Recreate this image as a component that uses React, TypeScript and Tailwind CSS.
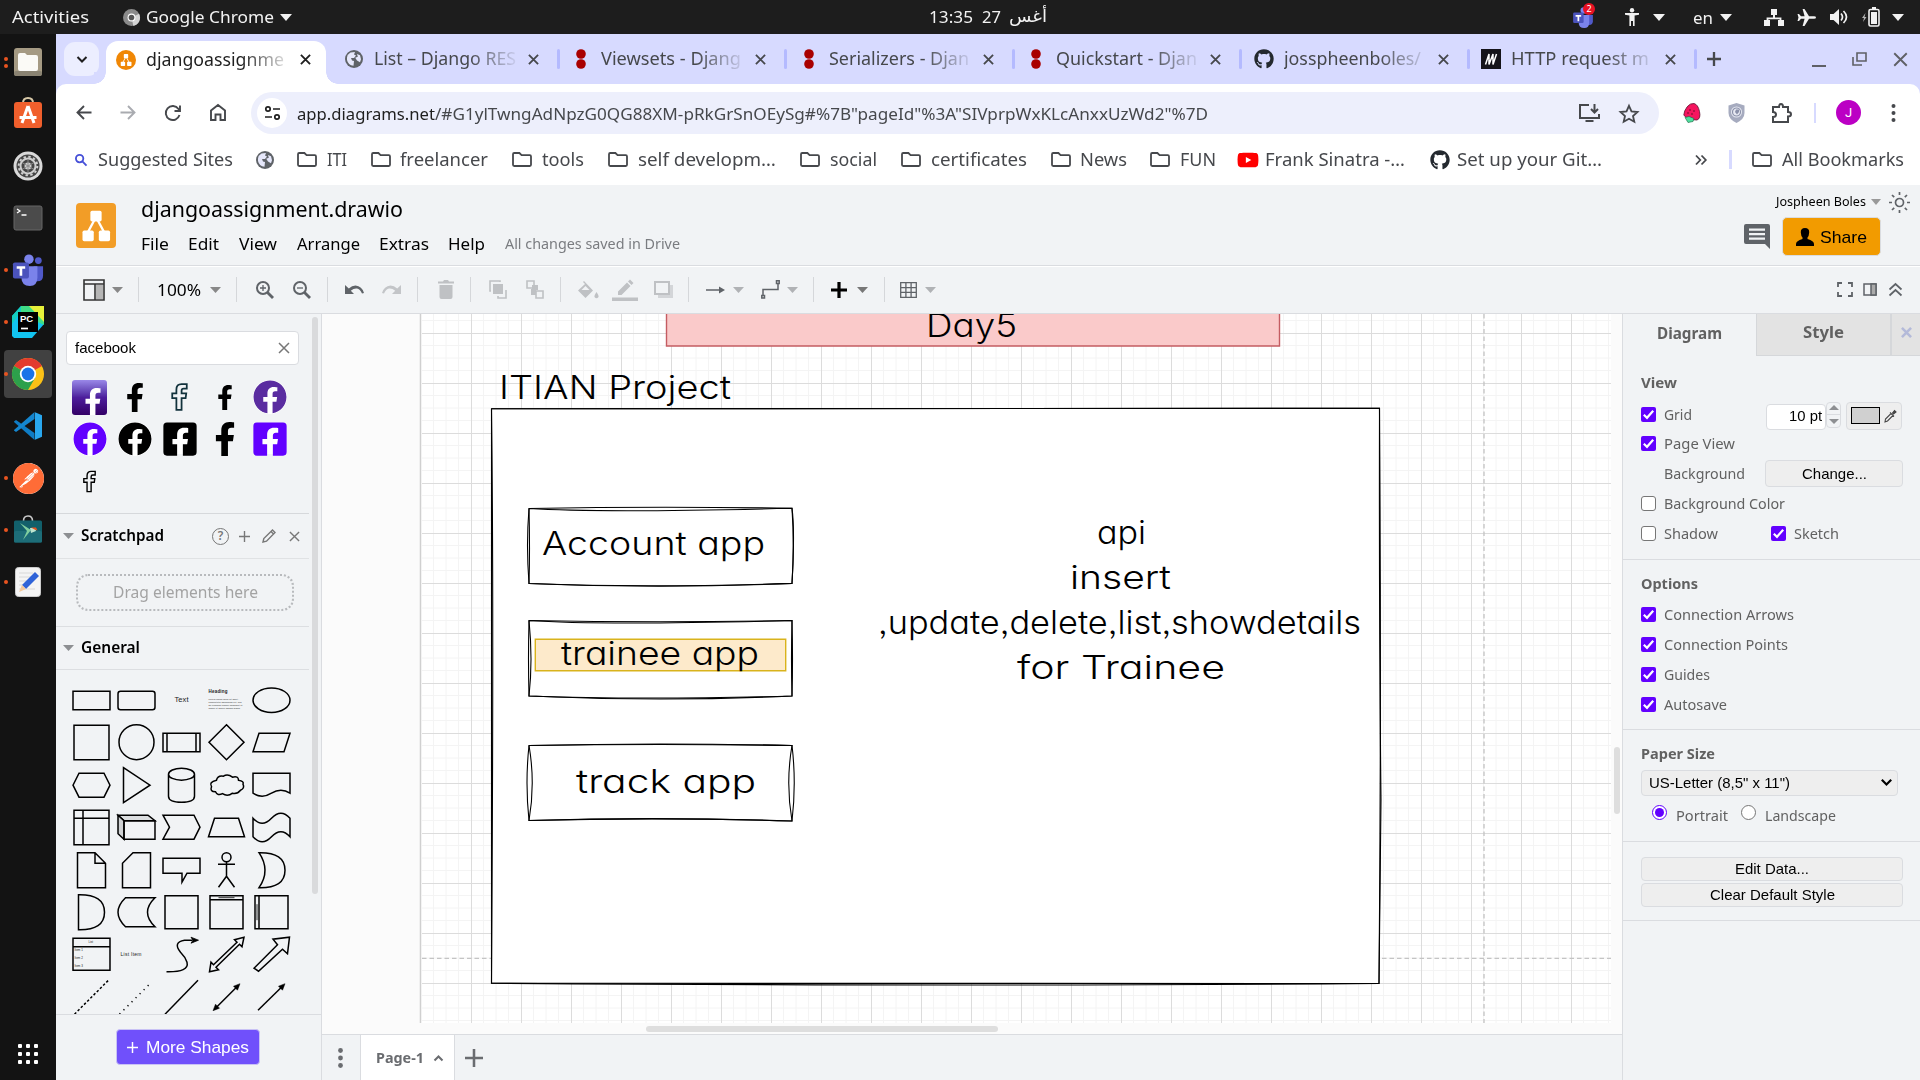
import React, { useLayoutEffect, useRef } from "react";
import { FaFacebook, FaFacebookF, FaFacebookSquare, FaGithub, FaYoutube } from "react-icons/fa";
import { SiPostman } from "react-icons/si";

/** One line of text condensed or stretched to an exact width. */
function T({ w, className = "", children }: { w: number; className?: string; children: React.ReactNode }) {
  const ref = useRef<HTMLSpanElement>(null);
  useLayoutEffect(() => {
    const el = ref.current;
    if (!el) return;
    el.style.transform = "none";
    const natural = el.getBoundingClientRect().width;
    if (natural > 0) el.style.transform = `scaleX(${w / natural})`;
  }, [w]);
  return (
    <span className={`block shrink-0 whitespace-nowrap leading-none ${className}`} style={{ width: w }}>
      <span ref={ref} className="inline-block origin-left">{children}</span>
    </span>
  );
}

type SvgProps = { className: string; vb: string; children: React.ReactNode; stroke?: number };
function Svg({ className, vb, children, stroke }: SvgProps) {
  return (
    <svg
      className={`block shrink-0 overflow-visible ${className}`}
      viewBox={vb}
      fill={stroke ? "none" : "currentColor"}
      stroke={stroke ? "currentColor" : "none"}
      strokeWidth={stroke}
    >
      {children}
    </svg>
  );
}

const Caret = ({ className = "" }: { className?: string }) => (
  <Svg className={`h-[7px] w-[12px] ${className}`} vb="0 0 12 7"><path d="M0 0h12L6 7z" /></Svg>
);
const Cross = ({ className = "", s = 2 }: { className?: string; s?: number }) => (
  <Svg className={className} vb="0 0 12 12" stroke={s}><path d="M1 1l10 10M11 1L1 11" /></Svg>
);
const Plus = ({ className = "", s = 2 }: { className?: string; s?: number }) => (
  <Svg className={className} vb="0 0 12 12" stroke={s}><path d="M6 0v12M0 6h12" /></Svg>
);
const Folder = ({ className = "" }: { className?: string }) => (
  <Svg className={`h-[15px] w-[20px] ${className}`} vb="0 0 20 15" stroke={1.8}>
    <path d="M1 2.2Q1 1 2.2 1H7.4L9.6 3.2H17.8Q19 3.2 19 4.4V12.8Q19 14 17.8 14H2.2Q1 14 1 12.8z" />
  </Svg>
);
const Globe = ({ className = "" }: { className?: string }) => (
  <Svg className={`h-[18px] w-[18px] text-[#5f6368] ${className}`} vb="0 0 18 18">
    <circle cx="9" cy="9" r="9" />
    <path fill="#e6e8fb" d="M2 7.5Q2.5 4 5.5 2.4L10 2 9 4.6 11 5.4 9 8 6 8 7 10.5 9 11 8.5 15.8Q3 15 2 10zM12 4l3 1.2 1 4-1 3-3-1.8-1.8-2.6 2.6-1z" />
  </Svg>
);

/* ------------------------------------------------ system bar */

const Teams = ({ className }: { className: string }) => (
  <Svg className={className} vb="0 0 32 34">
    <circle cx="17" cy="5.5" r="5" fill="#7b83eb" />
    <circle cx="27" cy="7" r="3.6" fill="#5059c9" />
    <path fill="#5059c9" d="M22 13h10v10q0 6-6 6h-4z" />
    <path fill="#7b83eb" d="M9 13h17v12q0 9-8 9-9 0-9-9z" />
    <rect y="9" width="17" height="17" rx="2" fill="#4b53bc" />
    <path fill="#fff" d="M4 13h9v2.6H9.9V23H7.1v-7.4H4z" />
  </Svg>
);

function SystemBar() {
  return (
    <header className="flex h-[34px] shrink-0 items-center bg-[#1d1d1d] text-[17px] text-[#f2f2f2]">
      <T w={77} className="ml-[12px] -mt-px">Activities</T>
      <Svg className="ml-[34px] h-[17px] w-[17px]" vb="0 0 18 18">
        <circle cx="9" cy="9" r="9" fill="#8a8a8a" /><path d="M9 9L17 5A9 9 0 0 1 11 18z" fill="#d4d4d4" />
        <circle cx="9" cy="9" r="4.2" fill="#fff" /><circle cx="9" cy="9" r="3" fill="#555" />
      </Svg>
      <T w={128} className="ml-[6px] -mt-px">Google Chrome</T>
      <Caret className="ml-[6px]" />
      <T w={44} className="ml-[637px] -mt-px">13:35</T>
      <T w={19} className="ml-[9px] -mt-px">27</T>
      <T w={38} className="ml-[8px] -mt-px font-['DejaVu_Sans',sans-serif]">أغس</T>
      <div className="relative ml-[526px]">
        <Teams className="h-[21px] w-[20px]" />
        <div className="absolute -right-0.5 -top-1 flex h-[12px] w-[12px] items-center justify-center rounded-full bg-[#e81123] text-[9px] leading-none text-white">2</div>
      </div>
      <Svg className="ml-[32px] h-[18px] w-[14px]" vb="0 0 14 18">
        <circle cx="7" cy="2.2" r="2.2" /><path d="M0 5h14v1.8l-4.4.8V18H8v-5H6v5H4.4V7.6L0 6.8z" />
      </Svg>
      <Caret className="ml-[14px]" />
      <T w={20} className="ml-[28px]">en</T>
      <Caret className="ml-[7px]" />
      <Svg className="ml-[32px] h-[17px] w-[20px]" vb="0 0 20 17">
        <path d="M7 0h6v6h-2v2.6h6.4V11H20v6h-6v-6h1.6v-.8H4.4v.8H6v6H0v-6h2.6V8.600h6.400V6H7z" />
      </Svg>
      <Svg className="ml-[13px] h-[17px] w-[19px]" vb="0 0 19 17">
        <path d="M19 8.500q0 1.300-2 1.300h-5L7.500 17H5.600l2-7.200H4L2 12H.5l1-3.500-1-3.500H2l2 2.200h3.600L5.600 0h1.900L12 7.200h5q2 0 2 1.300z" />
      </Svg>
      <Svg className="ml-[14px] h-[16px] w-[18px]" vb="0 0 18 16">
        <path d="M0 5h3.500L9 0v16L3.500 11H0z" /><path d="M11 4.500q3 3.500 0 7M13.500 2q6 6 0 12" fill="none" stroke="currentColor" strokeWidth="1.700" />
      </Svg>
      <Svg className="ml-[14px] h-[20px] w-[18px]" vb="0 0 18 20">
        <path d="M3.500 6L0 11h2L1 15l3.500-5h-2z" opacity=".7" /><path d="M10 0h4v2h-4z" />
        <rect x="7" y="2.500" width="10" height="16.500" rx="1.500" fill="none" stroke="currentColor" strokeWidth="1.600" /><path d="M9 5h6v12H9z" />
      </Svg>
      <Caret className="ml-[12px]" />
    </header>
  );
}

/* ------------------------------------------------ dock */

const dockIcons: { running?: number; active?: boolean; icon: React.ReactNode }[] = [
  { running: 2, icon: (
    <Svg className="h-[30px] w-[30px]" vb="0 0 30 30">
      <rect x="1" y="1" width="28" height="28" rx="3" fill="#a59a83" /><rect x="1" y="24" width="28" height="5" rx="2" fill="#8a8372" />
      <path d="M5 8q0-2 2-2h5l2 2h9q2 0 2 2v12q0 2-2 2H7q-2 0-2-2z" fill="#fbfaf6" />
    </Svg>) },
  { icon: (
    <Svg className="-mt-[3px] h-[32px] w-[30px]" vb="0 0 30 32">
      <path d="M10 6q0-5 5-5t5 5" fill="none" stroke="#d8c9a8" strokeWidth="2" />
      <rect x="1" y="5" width="28" height="26" rx="3" fill="#f05f2c" />
      <path d="M15 9L9 26M15 9l6 17M6.500 20.500h17" fill="none" stroke="#fff" strokeWidth="3" />
    </Svg>) },
  { icon: (
    <Svg className="h-[30px] w-[30px]" vb="0 0 30 30">
      <circle cx="15" cy="15" r="14.500" fill="#d9d9d9" /><circle cx="15" cy="15" r="11.500" fill="#454545" />
      <circle cx="15" cy="15" r="7.500" fill="none" stroke="#cfcfcf" strokeWidth="2" />
      <circle cx="15" cy="15" r="9.300" fill="none" stroke="#cfcfcf" strokeWidth="2" strokeDasharray="2.400 2.470" />
      <circle cx="15" cy="15" r="3.500" fill="#cfcfcf" /><path d="M15 8v14M9 11.500l12 7M9 18.500l12-7" stroke="#8d8d8d" />
    </Svg>) },
  { icon: (
    <Svg className="h-[26px] w-[30px]" vb="0 0 30 26">
      <rect x="1" y="1" width="28" height="24" rx="2" fill="#4b4b4b" stroke="#666" />
      <path d="M4 4l3 2-3 2M8.500 10h5" fill="none" stroke="#fff" strokeWidth="1.300" />
    </Svg>) },
  { running: 1, icon: <Teams className="h-[32px] w-[34px]" /> },
  { running: 1, icon: (
    <Svg className="h-[32px] w-[32px]" vb="0 0 32 32">
      <path d="M9 0h23v18L20 32H2L0 30V10z" fill="#12c4f0" /><path d="M9 0L0 10v8L10 4z" fill="#14cfc0" /><path d="M9 0h10l13 14v5L9 8z" fill="#3fdc86" /><path d="M17 0h15v16z" fill="#e8f13a" />
      <rect x="6" y="6" width="20" height="20" fill="#000" />
      <path d="M9 22.500h7" stroke="#fff" strokeWidth="1.700" />
      <text x="8" y="16" fontSize="9.500" fontWeight="700" fill="#fff" className="font-['Liberation_Sans',sans-serif]">PC</text>
    </Svg>) },
  { running: 1, active: true, icon: (
    <Svg className="h-[32px] w-[32px]" vb="0 0 32 32">
      <circle cx="16" cy="16" r="16" fill="#fbc116" />
      <path d="M16 16L2.100 8A16 16 0 0 1 29.900 8z" fill="#e33b2e" />
      <path d="M16 16L2.100 8A16 16 0 0 0 16 32l7-12z" fill="#2da04b" />
      <circle cx="16" cy="16" r="8.200" fill="#fff" /><circle cx="16" cy="16" r="6.400" fill="#1a73e8" />
    </Svg>) },
  { icon: (
    <Svg className="h-[28px] w-[28px]" vb="0 0 28 28">
      <path d="M0 9.500l2-1.500L20.500 21v7L0 10z" fill="#0f7cc4" /><path d="M0 18.500L2 20 20.500 7V0L0 18z" fill="#1486cf" />
      <path d="M20.500 0L28 3.300V24.700L20.500 28q1 0 .5-1.500V1.500q.5-1.500-.5-1.500z" fill="#29a7ee" />
    </Svg>) },
  { running: 1, icon: (
    <div className="flex h-[31px] w-[31px] items-center justify-center rounded-full bg-white">
      <SiPostman className="h-[31px] w-[31px] text-[#ff6c37]" />
    </div>) },
  { running: 1, icon: (
    <Svg className="-mt-[3px] h-[28px] w-[28px]" vb="0 0 28 28">
      <path d="M9.500 6q0-5 4.500-5t4.500 5" fill="none" stroke="#c9c9c9" strokeWidth="1.600" />
      <rect y="5.500" width="28" height="22" rx="1.500" fill="#12606b" /><rect y="16" width="28" height="11.500" rx="1.500" fill="#1d6d78" />
      <path d="M6 8l11 7-8 10 4-9z" fill="#7fcf9f" /><path d="M16 13h5l1 3-5 2z" fill="#bfe5d0" /><path d="M17 12.500h5l1.500 3-3-1z" fill="#e95420" />
    </Svg>) },
  { running: 1, icon: (
    <Svg className="h-[30px] w-[26px]" vb="0 0 26 30">
      <rect x=".5" y=".5" width="25" height="29" rx="3" fill="#f4f4f4" stroke="#ccc" />
      <path d="M4 6h14M4 10h12M4 14h10M4 18h10M4 22h16" stroke="#d8d8d8" />
      <path d="M20 5l4 4L11 22l-4-4z" fill="#2f63d8" /><path d="M7 18l4 4-7 3z" fill="#f4c89a" />
    </Svg>) },
];

function Dock() {
  return (
    <nav className="flex w-[56px] shrink-0 flex-col bg-[#131313] pt-[2px]">
      {dockIcons.map((d, i) => (
        <div key={i} className="relative flex h-[52px] items-center justify-center">
          <div className={d.active ? "flex h-[48px] w-[48px] items-center justify-center rounded-[4px] bg-[#414141]" : "flex h-[48px] w-[48px] items-center justify-center"}>{d.icon}</div>
          <div className="absolute left-[4px] flex flex-col gap-[3px]">
            {Array.from({ length: d.running ?? 0 }, (_, k) => <div key={k} className="h-[4px] w-[4px] rounded-full bg-[#e95420]" />)}
          </div>
        </div>
      ))}
      <div className="mx-auto mb-[16px] mt-auto grid grid-cols-3 gap-[4px]">
        {Array.from({ length: 9 }, (_, k) => <div key={k} className="h-[4px] w-[4px] rounded-[1px] bg-white" />)}
      </div>
    </nav>
  );
}

/* ------------------------------------------------ browser chrome */

const DrfDots = () => (
  <Svg className="h-[20px] w-[20px]" vb="0 0 20 20"><circle cx="10" cy="5" r="4.800" fill="#a90000" /><circle cx="10" cy="15" r="4.800" fill="#a90000" /></Svg>
);
const DrawioMark = ({ className }: { className: string }) => (
  <Svg className={className} vb="0 0 32 32">
    <path d="M16 8L8 23M16 8l8 15" stroke="#fff" strokeWidth="2" />
    <rect x="11" y="2.500" width="10" height="9.500" rx="1.500" fill="#fff" /><rect x="4" y="20" width="10" height="9.500" rx="1.500" fill="#fff" /><rect x="18.500" y="20" width="10" height="9.500" rx="1.500" fill="#fff" />
  </Svg>
);

const tabs: { title: string; w: number; icon: React.ReactNode }[] = [
  { title: "List – Django RES", w: 142, icon: <Globe className="ml-px mt-px" /> },
  { title: "Viewsets - Djang", w: 140, icon: <DrfDots /> },
  { title: "Serializers - Djan", w: 140, icon: <DrfDots /> },
  { title: "Quickstart - Djan", w: 141, icon: <DrfDots /> },
  { title: "josspheenboles/", w: 137, icon: <FaGithub className="h-[20px] w-[20px] text-[#24292f]" /> },
  { title: "HTTP request m", w: 138, icon: (
    <Svg className="h-[20px] w-[20px]" vb="0 0 20 20"><rect width="20" height="20" fill="#15141a" /><path d="M4.500 15.500L8 5v10.500L12 5v10.500L15.500 5" fill="none" stroke="#fff" strokeWidth="1.500" /></Svg>) },
];

const fade = "[mask-image:linear-gradient(to_right,#000_66%,transparent_102%)]";

function TabStrip() {
  return (
    <div className="flex h-[50px] shrink-0 items-center bg-[#d7daff] text-[17.5px] text-[#46484c]">
      <div className="ml-[8px] flex h-[34px] w-[35px] items-center justify-center rounded-[11px] bg-[#eceeff] text-[#1f1f1f]">
        <Svg className="h-[7px] w-[10px]" vb="0 0 10 7" stroke={2}><path d="M.5 1L5 5.500 9.500 1" /></Svg>
      </div>
      <div className="relative ml-[7px] mt-[7px] flex h-[43px] w-[220px] items-center rounded-t-[12px] bg-white pb-[7px] text-[#1f1f1f]">
        <div className="absolute -left-[12px] bottom-0 h-[12px] w-[12px] bg-[radial-gradient(circle_at_0_0,#d7daff_11.500px,#fff_12px)]" />
        <div className="absolute -right-[12px] bottom-0 h-[12px] w-[12px] bg-[radial-gradient(circle_at_100%_0,#d7daff_11.500px,#fff_12px)]" />
        <div className="ml-[10px] mt-[1px] flex h-[20px] w-[20px] items-center justify-center rounded-full bg-[#f08705]"><DrawioMark className="h-[14px] w-[14px]" /></div>
        <div className={`ml-[10px] mt-[1px] w-[144px] overflow-hidden py-1 ${fade}`}><T w={138}>djangoassignme</T></div>
        <Cross className="ml-[10px] mt-[1px] h-[11px] w-[11px]" />
      </div>
      <div className="ml-[17.500px] flex items-center">
        {tabs.map((t) => (
          <div key={t.title} className="flex w-[227.500px] items-center">
            <div className="h-[20px] w-[20px] shrink-0">{t.icon}</div>
            <div className={`ml-[10px] w-[144px] overflow-hidden py-1 ${fade}`}><T w={t.w}>{t.title}</T></div>
            <Cross className="ml-[10px] h-[11px] w-[11px]" />
            <div className="ml-[18px] h-[20px] w-[3px] rounded bg-[#b4baff]" />
          </div>
        ))}
      </div>
      <Plus className="-ml-[2px] h-[14px] w-[14px]" />
      <div className="ml-auto mr-[12px] flex items-center gap-[26px] text-[#5f6066]">
        <div className="mt-[13px] h-[2px] w-[14px] bg-current" />
        <Svg className="h-[14px] w-[15px]" vb="0 0 15 14" stroke={1.600}><path d="M5 1h9v8H5zM1 5v8h9" /></Svg>
        <Cross className="h-[15px] w-[15px]" s={1.500} />
      </div>
    </div>
  );
}

function AddressRow() {
  return (
    <div className="flex h-[50px] shrink-0 items-center rounded-t-[10px] bg-white pt-[8px] text-[#46484c]">
      <Svg className="-mt-px ml-[20px] h-[15px] w-[16px]" vb="0 0 16 15" stroke={1.900}><path d="M15.500 7.500H1.500M8 1L1.500 7.500 8 14" /></Svg>
      <Svg className="-mt-px ml-[28px] h-[15px] w-[16px] text-[#a9abb0]" vb="0 0 16 15" stroke={1.900}><path d="M.5 7.500h14M8 1l6.500 6.500L8 14" /></Svg>
      <Svg className="-mt-px ml-[29px] h-[16px] w-[16px]" vb="0 0 16 16" stroke={1.900}><path d="M14.500 10A7 7 0 1 1 13.500 4L15 6M15 .5V6H9.500" /></Svg>
      <Svg className="-mt-px ml-[29px] h-[17px] w-[16px]" vb="0 0 16 17" stroke={1.900}><path d="M1 6.500L8 1l7 5.500V16h-4.500v-5.500h-5V16H1z" /></Svg>
      <div className="ml-[25px] flex h-[42px] w-[1408px] items-center rounded-full bg-[#edeffc]">
        <div className="ml-[6px] flex h-[30px] w-[30px] items-center justify-center rounded-full bg-white text-[#1f1f1f]">
          <Svg className="h-[14px] w-[15px]" vb="0 0 15 14" stroke={1.700}><circle cx="3" cy="3" r="2.200" /><path d="M8 3h7M0 11h7" /><circle cx="12" cy="11" r="2.200" /></Svg>
        </div>
        <T w={138} className="ml-[10px] text-[17px] text-[#1f1f1f]">app.diagrams.net</T>
        <T w={773} className="text-[17px]">/#G1ylTwngAdNpzG0QG88XM-pRkGrSnOEySg#%7B"pageId"%3A"SIVprpWxKLcAnxxUzWd2"%7D</T>
        <Svg className="ml-[371px] h-[18px] w-[21px]" vb="0 0 21 18" stroke={2}><path d="M10 1H1v13h19v-4M15.500 0v8M12 5l3.500 3.500L19 5M6.500 17h8" /></Svg>
        <Svg className="ml-[19px] h-[19px] w-[20px]" vb="0 0 20 19" stroke={1.800}><path d="M10 1.800l2.500 5.600 6 .6-4.500 4 1.300 5.800L10 14.700l-5.300 3.100L6 12 1.500 8l6-.6z" /></Svg>
      </div>
      <Svg className="ml-[24px] h-[20px] w-[17px]" vb="0 0 17 20">
        <path d="M11 .5q4 1 5.500 8T14 17Q4 17 .8 12 1 8 4 4T11 .5z" fill="#f5155f" stroke="#5b1030" strokeWidth=".8" /><path d="M2 14.500l4-1 5 2-1 3-5 1z" fill="#4fe0a0" stroke="#14603c" strokeWidth=".6" />
        <path d="M7 6v2M11 7v2M9 10v2M5 9v2" stroke="#70102c" />
      </Svg>
      <Svg className="ml-[28px] h-[20px] w-[17px]" vb="0 0 17 20">
        <path d="M8.500 0l8 2.500V10q0 6-8 10-8-4-8-10V2.500z" fill="#a6abbf" /><circle cx="8.500" cy="9" r="5.500" fill="#e7e9f2" /><circle cx="8.500" cy="9" r="4" fill="none" stroke="#8b91aa" strokeWidth="1.200" /><path d="M8 6.500h3V9L9 11.500 7 9z" fill="#8b91aa" />
      </Svg>
      <Svg className="ml-[27px] h-[20px] w-[20px]" vb="0 0 20 20" stroke={2}><path d="M1 4h6q0-3 2-3t2 3h5v5q3 0 3 2.200T16 13.500V19H1v-5q3 0 3-2.500T1 9z" /></Svg>
      <div className="ml-[22px] h-[20px] w-[2px] bg-[#d7daff]" />
      <div className="-mt-px ml-[20px] flex h-[25px] w-[25px] items-center justify-center rounded-full bg-[#bb00c4] font-['Roboto',sans-serif] text-[13px] text-white">J</div>
      <Svg className="-mt-px ml-[30px] h-[18px] w-[5px]" vb="0 0 5 18"><circle cx="2.500" cy="2" r="2" /><circle cx="2.500" cy="9" r="2" /><circle cx="2.500" cy="16" r="2" /></Svg>
    </div>
  );
}

function Bookmarks() {
  return (
    <div className="flex h-[51px] shrink-0 items-center bg-white text-[17.500px] text-[#46484c]">
      <Svg className="ml-[19px] h-[12px] w-[12px] text-[#4650d8]" vb="0 0 13 13" stroke={2}><circle cx="5" cy="5" r="4" /><path d="M8 8l4.500 4.500" /></Svg>
      <T w={135} className="ml-[11px]">Suggested Sites</T>
      <Globe className="ml-[23px]" />
      <Folder className="ml-[23px]" /><T w={20} className="ml-[10px]">ITI</T>
      <Folder className="ml-[24px]" /><T w={88} className="ml-[9px]">freelancer</T>
      <Folder className="ml-[24px]" /><T w={42} className="ml-[10px]">tools</T>
      <Folder className="ml-[24px]" /><T w={138} className="ml-[10px]">self developm…</T>
      <Folder className="ml-[24px]" /><T w={47} className="ml-[10px]">social</T>
      <Folder className="ml-[24px]" /><T w={96} className="ml-[10px]">certificates</T>
      <Folder className="ml-[24px]" /><T w={47} className="ml-[9px]">News</T>
      <Folder className="ml-[23px]" /><T w={36} className="ml-[10px]">FUN</T>
      <FaYoutube className="ml-[21px] h-[20px] w-[22px] shrink-0 text-[#f00]" /><T w={140} className="ml-[6px]">Frank Sinatra -…</T>
      <FaGithub className="ml-[25px] h-[20px] w-[20px] shrink-0 text-[#24292f]" /><T w={145} className="ml-[7px]">Set up your Git…</T>
      <Svg className="ml-[93px] h-[10px] w-[12px]" vb="0 0 12 10" stroke={1.800}><path d="M1 .5L5.300 5 1 9.500M6.500 .5L10.800 5 6.500 9.500" /></Svg>
      <div className="ml-[22px] h-[19px] w-[3px] bg-[#d7daff]" />
      <Folder className="ml-[20px]" /><T w={122} className="ml-[10px]">All Bookmarks</T>
    </div>
  );
}

/* ------------------------------------------------ draw.io header */

function AppHeader() {
  return (
    <div className="flex h-[81px] shrink-0 border-b border-b-[#dadce0] bg-[#f1f3f5] text-black">
      <div className="ml-[20px] mt-[18px] flex h-[45px] w-[40px] items-center justify-center rounded-[4px] bg-[#f29d27]"><DrawioMark className="h-[36px] w-[36px]" /></div>
      <div className="ml-[25px] flex flex-col">
        <T w={262} className="mt-[12px] text-[22px]">djangoassignment.drawio</T>
        <div className="mt-[17px] flex items-center text-[16px]">
          <T w={28}>File</T><T w={31} className="ml-[19px]">Edit</T><T w={38} className="ml-[20px]">View</T>
          <T w={63} className="ml-[20px]">Arrange</T><T w={50} className="ml-[19px]">Extras</T><T w={37} className="ml-[19px]">Help</T>
          <T w={175} className="ml-[20px] text-[14px] text-[#7a7c80]">All changes saved in Drive</T>
        </div>
      </div>
      <div className="ml-auto mr-[10px] flex flex-col">
        <div className="mt-[6px] flex h-[22px] items-center justify-end">
          <T w={90} className="text-[12.500px]">Jospheen Boles</T>
          <Svg className="ml-[5px] h-[6px] w-[10px] text-[#999]" vb="0 0 10 6"><path d="M0 0h10L5 6z" /></Svg>
          <Svg className="ml-[8px] h-[21px] w-[21px] text-[#5f6368]" vb="0 0 21 21" stroke={1.700}>
            <circle cx="10.500" cy="10.500" r="4" />
            <path d="M10.500 0v3M10.500 18v3M0 10.500h3M18 10.500h3M3 3l2.200 2.200M15.800 15.800L18 18M18 3l-2.200 2.200M5.200 15.800L3 18" />
          </Svg>
        </div>
        <div className="mr-[29px] mt-[4px] flex items-center">
          <Svg className="h-[25px] w-[26px] text-[#5f6368]" vb="0 0 26 25">
            <path fillRule="evenodd" d="M2 0h22q2 0 2 2v23l-5-5H2q-2 0-2-2V2q0-2 2-2zM5 4.500v2.200h16V4.500zM5 9v2.200h16V9zM5 13.500v2.200h16v-2.200z" />
          </Svg>
          <div className="ml-[12px] flex h-[39px] w-[99px] items-center rounded-[5px] border border-[#dadce0] bg-[#f29b00]">
            <Svg className="ml-[13px] h-[18px] w-[18px]" vb="0 0 18 18"><path d="M9 0q4.500 0 4.200 4.500Q13 8 11.500 9.500V11Q18 13 18 16v2H0v-2Q0 13 6.500 11V9.500Q5 8 4.800 4.500 4.500 0 9 0z" /></Svg>
            <T w={47} className="ml-[6px] mt-[2px] font-['Liberation_Sans',sans-serif] text-[17px]">Share</T>
          </div>
        </div>
      </div>
    </div>
  );
}

const Sep = ({ className }: { className: string }) => <div className={`h-[25px] w-px shrink-0 bg-[#d5d7da] ${className}`} />;
const SmallCaret = ({ className }: { className: string }) => (
  <Svg className={`h-[6px] w-[11px] ${className}`} vb="0 0 11 6"><path d="M0 0h11L5.500 6z" /></Svg>
);

function Toolbar() {
  return (
    <div className="flex h-[48px] shrink-0 items-center border-b border-t border-b-[#dadce0] border-t-white bg-[#f1f3f5] pb-px text-[#5f6368]">
      <Svg className="ml-[27px] h-[22px] w-[22px] text-[#333]" vb="0 0 22 22" stroke={1.600}><path d="M1 1h20v20H1zM1 5h20M12 5v16" /><path d="M13 6h7v14h-7z" fill="#b5b5b5" stroke="none" /></Svg>
      <SmallCaret className="ml-[7px] text-[#888]" />
      <Sep className="ml-[15px]" />
      <T w={44} className="ml-[18px] text-[16px] text-black">100%</T>
      <SmallCaret className="ml-[9px] text-[#888]" />
      <Sep className="ml-[15px]" />
      <Svg className="ml-[19px] h-[18px] w-[18px]" vb="0 0 18 18" stroke={2}><circle cx="7" cy="7" r="6" /><path d="M11.500 11.500l5.500 5.500" strokeWidth="2.800" /><path d="M7 4v6M4 7h6" strokeWidth="1.300" /></Svg>
      <Svg className="ml-[19px] h-[18px] w-[18px]" vb="0 0 18 18" stroke={2}><circle cx="7" cy="7" r="6" /><path d="M11.500 11.500l5.500 5.500" strokeWidth="2.800" /><path d="M4 7h6" strokeWidth="1.300" /></Svg>
      <Sep className="ml-[16px]" />
      <Svg className="ml-[17px] h-[11px] w-[19px]" vb="0 0 19 11"><path d="M0 1v9h9L5.800 6.800Q9 4 12 4.500T17 9.500L19 9Q17 2 10.500 1.500 7 1.500 3.800 4.500z" /></Svg>
      <Svg className="ml-[18px] h-[11px] w-[19px] text-[#c3c5c8]" vb="0 0 19 11"><path d="M19 1v9h-9L13.200 6.800Q10 4 7 4.500T2 9.500L0 9Q2 2 8.500 1.500 12 1.500 15.200 4.500z" /></Svg>
      <Sep className="ml-[16px]" />
      <Svg className="ml-[20px] h-[19px] w-[16px] text-[#bfc1c4]" vb="0 0 16 19"><path d="M0 1.500h5L6 0h4l1 1.500h5v2H0zM1.500 5h13v12q0 2-2 2h-9q-2 0-2-2z" /></Svg>
      <Sep className="ml-[16px]" />
      <Svg className="ml-[18px] h-[19px] w-[18px] text-[#bfc1c4]" vb="0 0 18 19"><path d="M4 4h10v10H4z" /><path d="M2 11H1V1h10v1M17 10v8H9v-2" fill="none" stroke="currentColor" strokeWidth="1.600" /></Svg>
      <Svg className="ml-[19px] h-[19px] w-[18px] text-[#bfc1c4]" vb="0 0 18 19"><path d="M6 5h6v5h-2v5H5V9h1z" /><path d="M1 1h7v7H1zM10 11h7v7h-7z" fill="none" stroke="currentColor" strokeWidth="1.600" /></Svg>
      <Sep className="ml-[16px]" />
      <Svg className="ml-[17px] h-[18px] w-[21px] text-[#bfc1c4]" vb="0 0 21 18"><path d="M6 0l9 9.500-7.500 7.500L0 9.500 7 3 5 1zM7.500 5L3.500 9h8z" fillRule="evenodd" /><path d="M18.500 11q2.500 3.500 2 5-2 2.500-4 0-.5-1.500 2-5z" /></Svg>
      <Svg className="ml-[13px] h-[22px] w-[26px] text-[#bfc1c4]" vb="0 0 26 22"><path d="M0 18.500h26V22H0zM6 16v-3.500L15 3.500l3.500 3.500L9.500 16zM16 2.500L18 .5l3.500 3.500-2 2z" /></Svg>
      <Svg className="ml-[16px] h-[17px] w-[19px] text-[#bfc1c4]" vb="0 0 19 17"><path d="M4 4h15v13H4z" opacity=".6" /><rect x="1" y="1" width="14" height="12" fill="#f1f3f5" stroke="currentColor" strokeWidth="2" /></Svg>
      <Sep className="ml-[15px]" />
      <Svg className="ml-[17px] h-[8px] w-[19px]" vb="0 0 19 8"><path d="M0 3.200h13V.5L19 4l-6 3.500V4.800H0z" /></Svg>
      <SmallCaret className="ml-[8px] text-[#b0b2b5]" />
      <Svg className="ml-[17px] h-[19px] w-[19px]" vb="0 0 19 19" stroke={1.500}><path d="M2 15V9.500h15V4" /><path d="M.8 15.500h2.700V18H.8zM15.500.8h2.700v2.700h-2.700z" /></Svg>
      <SmallCaret className="ml-[7px] text-[#b0b2b5]" />
      <Sep className="ml-[15px]" />
      <Plus className="ml-[17px] h-[16px] w-[16px] text-black" s={2.400} />
      <SmallCaret className="ml-[10px] text-[#777]" />
      <Sep className="ml-[16px]" />
      <Svg className="ml-[15px] h-[16px] w-[17px]" vb="0 0 17 16" stroke={1.300}><path d="M.7.700h15.600v14.600H.7zM5.900.7v14.600M11.100.7v14.600M.7 5.600h15.600M.7 10.400h15.600" /></Svg>
      <SmallCaret className="ml-[8px] text-[#b0b2b5]" />
      <div className="ml-auto mr-[18px] flex items-center">
        <Svg className="h-[15px] w-[16px]" vb="0 0 16 15" stroke={1.800}><path d="M1 5V1h4M11 1h4v4M15 10v4h-4M5 14H1v-4" /></Svg>
        <Svg className="ml-[10px] h-[13px] w-[14px]" vb="0 0 14 13" stroke={1.500}><path d="M1 1h12v11H1z" /><path d="M8 1h5v11H8z" fill="#aaa" /></Svg>
        <Svg className="ml-[12px] h-[13px] w-[13px]" vb="0 0 13 13" stroke={1.700}><path d="M.5 6.500l6-5.500 6 5.500M.5 12.500l6-5.500 6 5.500" /></Svg>
      </div>
    </div>
  );
}

/* ------------------------------------------------ shape sidebar */

const OutlineF = ({ className }: { className: string }) => (
  <Svg className={className} vb="0 0 16 27" stroke={1.700}>
    <path d="M5 26V14.500H1V10h4V6.500Q5 1 10 1h5v4.500h-3Q10 5.500 10 7.500V10h4.500l-.6 4.500H10V26z" />
  </Svg>
);

const facebookIcons: React.ReactNode[] = [
  <div className="relative h-[35px] w-[35px] overflow-hidden rounded-[3px] bg-linear-to-b from-[#9a88e8] via-[#4d1d9c] to-[#330066]">
    <FaFacebookF className="absolute -bottom-px right-[4px] h-[28px] w-[20px] text-white" />
  </div>,
  <FaFacebookF className="h-[29px] w-[22px]" />,
  <OutlineF className="h-[28px] w-[17px] text-[#12323c]" />,
  <FaFacebookF className="h-[25px] w-[20px]" />,
  <FaFacebook className="h-[34px] w-[34px] rounded-full bg-white text-[#5a2ca0]" />,
  <FaFacebook className="h-[34px] w-[34px] rounded-full bg-white text-[#6200ff]" />,
  <FaFacebook className="h-[34px] w-[34px] rounded-full bg-white" />,
  <div className="flex h-[34px] w-[34px] items-center justify-center bg-[linear-gradient(#fff,#fff)] bg-size-[24px_30px] bg-center bg-no-repeat"><FaFacebookSquare className="h-[38px] w-[38px] shrink-0" /></div>,
  <FaFacebookF className="h-[34px] w-[24px]" />,
  <div className="flex h-[34px] w-[34px] items-center justify-center bg-[linear-gradient(#fff,#fff)] bg-size-[24px_30px] bg-center bg-no-repeat"><FaFacebookSquare className="h-[38px] w-[38px] shrink-0 text-[#6200ff]" /></div>,
  <OutlineF className="h-[25px] w-[13px]" />,
];

const mini = "font-['Liberation_Sans',sans-serif]";
const shapes: React.ReactNode[] = [
  <path d="M-18.500-9h37V9.500h-37z" />,
  <rect x="-18.500" y="-9" width="37" height="18.500" rx="2.500" />,
  <text x="-7" y="2" fontSize="7.500" textLength="14" fill="#222" stroke="none" className={mini}>Text</text>,
  <g fill="#222" stroke="none" className={mini}>
    <text x="-18" y="-7.500" fontSize="4.500" fontWeight="700" textLength="19">Heading</text>
    <text x="-18" y="-.500" fontSize="2.300" textLength="30">Lorem ipsum dolor sit amet,</text>
    <text x="-18" y="2.500" fontSize="2.300" textLength="33">consectetur adipisicing elit, sed</text>
    <text x="-18" y="5.500" fontSize="2.300" textLength="34">do eiusmod tempor incididunt ut</text>
    <text x="-18" y="8.500" fontSize="2.300" textLength="32">labore et dolore magna aliqua.</text>
  </g>,
  <ellipse rx="18.500" ry="12.300" />,
  <path d="M-17.500-17h35v34.500h-35z" />,
  <circle r="17.500" />,
  <path d="M-18.500-9h37V9.500h-37zM-14.500-9V9.500M14.500-9V9.500" />,
  <path d="M0-17.500L17.500 0 0 17.500-17.500 0z" />,
  <path d="M-12.500-9h31l-6 18.500h-31z" />,
  <path d="M-12.500-12h25l6 12-6 12h-25l-6-12z" />,
  <path d="M-13-17.500L13.500 0-13 17.500z" />,
  <path d="M-13-11v22q0 6 13 6t13-6v-22M-13-11a13 6 0 0 0 26 0a13 6 0 0 0-26 0" />,
  <path d="M-10-5Q-9-10-3-9 1-12 6-8q6-1.500 6 3 6 1 4.500 4 2 4-2.500 6Q11 9 6 8 1 12-4 8.500-9 11-11 6.500q-6 0-4-5Q-18-3-10-5z" />,
  <path d="M-18.500-12h37V8q-9-6-18.500 0t-18.500 0z" />,
  <path d="M-17.500-17h35v34.500h-35zM-8.500-17v34.500M-17.500-9h35" />,
  <g><path d="M-18.500-12h30l7 5.500h-31z" fill="#dcdee0" /><path d="M-18.500-12l6 5.500v18.500l-6-5.500z" fill="#cfd1d3" /><path d="M-12.500-6.500h31v18.500h-31z" /></g>,
  <path d="M-18.500-12h31l6 12-6 12h-31l6.500-12z" />,
  <path d="M-12-9h24l6 18.500h-36z" />,
  <path d="M-18.500-9q9 10 18.500 0t18.500 0V9.500q-9-10-18.500 0t-18.500 0z" />,
  <path d="M-14-17.500H3.500L14-7v24.500h-28zM3.500-17.500V-7H14" />,
  <path d="M-3.500-17.500H14v35h-28V-7z" />,
  <path d="M-18.500-12h37V3h-13L.500 12V3h-19z" />,
  <g><circle cy="-13" r="4.500" /><path d="M0-8.500V6M-8.500-6h17M0 6l-8 11M0 6l8 11" /></g>,
  <path d="M-12.500-17.500Q13.500-18 13.500 0t-26 17.500q12-17 0-35z" />,
  <path d="M-13-17.500Q13-18 13 0T-13 17.500z" />,
  <path d="M-11-14.500h29.500q-15 14.500 0 29H-11Q-26 0-11-14.500z" />,
  <path d="M-16.500-16.500h33v33h-33z" />,
  <g><path d="M-16.500-16.500h33v33h-33zM-16.500-12.500h33" /><path d="M-8-14.500H8" strokeWidth=".8" /></g>,
  <g><path d="M-16.500-16.500h33v33h-33zM-12.500-16.500v33" /><path d="M-14.500-8V8" strokeWidth=".8" /></g>,
  <g>
    <path d="M-18.500-16h37v32h-37zM-18.500-7.500h37" />
    <g fill="#222" stroke="none" fontSize="3" className={mini}><text x="-3" y="-11">List</text><text x="-17" y="-3">Item 1</text><text x="-17" y="5">Item 2</text><text x="-17" y="13">Item 3</text></g>
  </g>,
  <text x="-16" y="2" fontSize="5" textLength="21" fill="#222" stroke="none" className={mini}>List Item</text>,
  <g><path d="M-15 17.500Q8 18 5.500 8 4 3-1 -2-9-12 3-14h8" /><path d="M17-14l-7.500-3 2 3-2 3z" fill="#000" strokeWidth=".8" /></g>,
  <path d="M-17 17.500l1.500-9.500 2.500 2.500L10.500-12 8-14.500l9.500-2.500-2 9.500-2.500-2.500L-10.500 13l2.500 2.500z" />,
  <path d="M-17.500 14L6-9.500 1.500-15l16.500-2L16-.500l-5-4.500-24 22z" />,
  <path d="M-17 17L17-17" strokeDasharray="2.500 2" />,
  <path d="M-17 17L15-15" strokeDasharray="1.200 4.500" />,
  <path d="M-16.500 17L16.500-17" />,
  <g><path d="M-12 12L12-12" /><path d="M13.500-13.500l-6.500 2.500 4 4zM-13.500 13.500l6.500-2.500-4-4z" fill="#000" strokeWidth=".5" /></g>,
  <g><path d="M-13.500 13L12-12" /><path d="M13.500-13.500l-6.500 2.500 4 4z" fill="#000" strokeWidth=".5" /></g>,
];

const SectionCaret = () => <Svg className="ml-[7px] h-[6px] w-[11px] text-[#8d8f92]" vb="0 0 11 6"><path d="M0 0h11L5.500 6z" /></Svg>;

function Sidebar() {
  return (
    <aside className="flex w-[266px] shrink-0 flex-col border-r border-[#dadce0] bg-[#f1f3f5] text-black">
      <div className="flex h-[700px] overflow-hidden">
        <div className="w-[253px] shrink-0">
          <div className="ml-[10px] mt-[17px] flex h-[34px] w-[233px] items-center rounded-[4px] border border-[#dadce0] bg-white">
            <T w={61} className="-mt-px ml-[8px] font-['Liberation_Sans',sans-serif] text-[15px]">facebook</T>
            <Cross className="ml-[142px] h-[12px] w-[12px] text-[#777]" s={1.500} />
          </div>
          <div className="ml-[11px] mt-[11px] grid h-[137px] grid-cols-[repeat(5,45px)] auto-rows-[42px]">
            {facebookIcons.map((icon, i) => <div key={i} className="flex items-center justify-center">{icon}</div>)}
          </div>
          <div className="flex h-[45px] items-center border-t border-[#d6d8db]">
            <SectionCaret />
            <T w={83} className="-mt-px ml-[7px] text-[15.500px] font-semibold">Scratchpad</T>
            <div className="ml-[48px] flex items-center text-[#777]">
              <div className="flex h-[17px] w-[17px] items-center justify-center rounded-full border-[1.500px] border-current text-[12px] font-semibold leading-none">?</div>
              <Plus className="ml-[10px] h-[11px] w-[11px]" s={1.500} />
              <Svg className="ml-[12px] h-[14px] w-[14px]" vb="0 0 14 14" stroke={1.400}><path d="M1 13l.8-3.500L10.500 1l2.500 2.500L4.500 12.200zM9 2.500L11.500 5" /></Svg>
              <Cross className="ml-[13px] h-[11px] w-[11px]" s={1.500} />
            </div>
          </div>
          <div className="h-[68px] border-t border-[#e0e2e4] pt-[15px]">
            <div className="ml-[20px] flex h-[37px] w-[218px] items-center justify-center rounded-[12px] border-2 border-dotted border-[#b8babd] text-[16px] text-[#a3a3a3]">
              <T w={145} className="-mt-0.5">Drag elements here</T>
            </div>
          </div>
          <div className="flex h-[44px] items-center border-y border-[#dcdee1]">
            <SectionCaret />
            <T w={59} className="-mt-px ml-[7px] text-[15.500px] font-semibold">General</T>
          </div>
          <div className="ml-[13.200px] mt-[9px] grid grid-cols-[repeat(5,45px)]">
            {shapes.map((s, i) => (
              <svg key={i} viewBox="-22.5 -21.2 45 42.4" className="block h-[42.400px] w-[45px] fill-none stroke-black stroke-[1.500]">{s}</svg>
            ))}
          </div>
        </div>
        <div className="ml-[3px] mt-[3px] h-[577px] w-[6px] rounded-full bg-[#d9dadc]" />
      </div>
      <div className="flex flex-1 justify-center border-t border-[#dadce0] pt-[14px]">
        <div className="-ml-px flex h-[36px] w-[144px] items-center rounded-[4px] border border-[#c9c2f5] bg-[#7050fb] font-['Liberation_Sans',sans-serif] text-[17px] text-white">
          <Plus className="ml-[10px] h-[11px] w-[11px]" s={1.600} />
          <T w={103} className="ml-[8px]">More Shapes</T>
        </div>
      </div>
    </aside>
  );
}

/* ------------------------------------------------ canvas */

const labels: { t: string; x: number; y: number; w: number }[] = [
  { t: "Day5", x: 926, y: 337, w: 91 },
  { t: "ITIAN Project", x: 499, y: 399, w: 232 },
  { t: "Account app", x: 542, y: 554.500, w: 223 },
  { t: "trainee app", x: 561, y: 664.500, w: 198 },
  { t: "track app", x: 576, y: 792.500, w: 180 },
  { t: "api", x: 1097, y: 543.500, w: 49 },
  { t: "insert", x: 1070, y: 589, w: 101 },
  { t: ",update,delete,list,showdetails", x: 878, y: 633.500, w: 483 },
  { t: "for Trainee", x: 1017, y: 679, w: 208 },
];

function Canvas() {
  return (
    <div className="h-[720px] bg-[#fbfbfb]">
      <svg viewBox="322 314 1300 720" className="block h-[720px] w-[1300px]">
        <defs>
          <pattern id="grid" x="471" y="333" width="50" height="50" patternUnits="userSpaceOnUse">
            <path d="M12.500 0v50M25 0v50M37.500 0v50M0 12.500h50M0 25h50M0 37.500h50" stroke="#f4f4f4" fill="none" />
            <path d="M.5 0v50M0 .500h50" stroke="#dcdcdc" fill="none" />
          </pattern>
        </defs>
        <path d="M421 314h1190v709H421z" fill="#fff" />
        <path d="M422 314h1189v709H422z" fill="url(#grid)" />
        <path d="M420.500 314v709" stroke="#d0d0d0" strokeWidth="1.500" />
        <path d="M1484 314v709M422 958.300h1189" stroke="#c4c4c4" strokeWidth="1.300" strokeDasharray="4.500 3" />
        <path d="M666.500 300h613v46h-613z" fill="#facaca" stroke="#c45c62" strokeWidth="1.400" />
        <g stroke="#000" strokeWidth="1.100" fill="none">
          <path d="M491.500 408.500h888v575h-888z" fill="#fff" stroke="none" />
          <path d="M491.500 408.700Q880 410.500 1379.500 408.300Q1381.500 700 1379 983.500Q980 986.500 491.500 983.300Q491 700 491.500 408.700z" />
          <path d="M491.500 408.700Q800 408 1379.500 408.300Q1379 620 1381 800Q1380 900 1379 983.500Q900 985 491.500 983.300Q494 600 491.500 408.700" />
          <path d="M529 508.500Q660 506 792 508.300Q794.500 545 792 583.400Q660 589 529 583.500Q526 545 529 508.500z" />
          <path d="M529 508.500Q600 513 792 508.300Q795 530 792 583.400Q640 588 529 583.500Q530 550 529 508.500" />
          <path d="M529 620.500Q600 625.500 792 620.500Q791 660 792 696Q660 702 529 696Q533 660 529 620.500z" />
          <path d="M529 620.500Q660 623 792 620.500Q793 660 792 696Q640 700 529 696Q528 660 529 620.500" />
          <path d="M529 745.500Q660 742.500 792 745.500Q796.500 783 792 821Q660 816.500 529 820.500Q525 783 529 745.500z" />
          <path d="M529 745.500Q660 743.500 792 745.500Q785.500 783 792 821Q660 817 529 820.500Q535.500 783 529 745.500" />
        </g>
        <path d="M535.300 639.300h250.400v31.500h-250.400z" fill="#fdeacb" stroke="#d9b31c" strokeWidth="1.400" />
        <g fontSize="33" fill="#000" className="font-['Inter','Noto_Sans',sans-serif] font-light [font-feature-settings:'cv11'_1,'ss03'_1]">
          {labels.map((l) => <text key={l.t} x={l.x} y={l.y} textLength={l.w} lengthAdjust="spacingAndGlyphs">{l.t}</text>)}
        </g>
        <rect x="1614" y="747" width="6" height="67" rx="3" fill="#dedede" />
        <rect x="646" y="1026" width="352" height="6" rx="3" fill="#dedede" />
      </svg>
    </div>
  );
}

function PageTabs() {
  return (
    <div className="flex h-[46px] items-center border-t border-[#dadce0] bg-[#f1f3f5] text-[#6a6c70]">
      <Svg className="ml-[16px] h-[20px] w-[5px]" vb="0 0 5 20"><circle cx="2.500" cy="2.500" r="2.400" /><circle cx="2.500" cy="10" r="2.400" /><circle cx="2.500" cy="17.500" r="2.400" /></Svg>
      <div className="ml-[17px] flex h-full w-[95px] items-center border-x border-[#dadce0] bg-white">
        <T w={48} className="ml-[15px] text-[14.500px] font-bold">Page-1</T>
        <Svg className="ml-[10px] h-[6px] w-[9px]" vb="0 0 9 6" stroke={2}><path d="M.5 5.500l4-4 4 4" /></Svg>
      </div>
      <Plus className="ml-[10px] h-[18px] w-[18px]" s={1.700} />
    </div>
  );
}

/* ------------------------------------------------ format panel */

function Check({ on = true, label, w, className = "" }: { on?: boolean; label: string; w: number; className?: string }) {
  return (
    <div className={`flex items-center ${className}`}>
      {on ? (
        <div className="flex h-[15px] w-[15px] items-center justify-center rounded-[2px] bg-[#6200ff] text-white">
          <Svg className="h-[9px] w-[11px]" vb="0 0 11 9" stroke={2.200}><path d="M.8 4.800L4 7.800 10.200.8" /></Svg>
        </div>
      ) : (
        <div className="h-[15px] w-[15px] rounded-[3px] border border-[#767676] bg-white" />
      )}
      <T w={w} className="ml-[8px]">{label}</T>
    </div>
  );
}

const btn = "flex items-center justify-center rounded-[4px] border border-[#dadce0] bg-[#eee] font-['Liberation_Sans',sans-serif] text-black";

function FormatPanel() {
  return (
    <aside className="flex w-[298px] shrink-0 flex-col border-l border-[#dadce0] bg-[#f1f3f5] text-[14.500px] text-[#616161]">
      <div className="flex h-[42px] text-[15.500px] font-bold">
        <div className="flex w-[133px] items-center justify-center pb-0.5"><T w={65}>Diagram</T></div>
        <div className="flex w-[134px] items-center justify-center border-b border-l border-[#d5d7da] bg-[#e3e3e3] pb-1"><T w={41}>Style</T></div>
        <div className="flex flex-1 items-center border-b border-l-2 border-[#d5d7da] bg-[#e3e3e3] pb-1 pl-[9px]"><Cross className="h-[11px] w-[11px] text-[#b4bad9]" s={2.800} /></div>
      </div>
      <div className="h-[204px] border-b border-[#dadce0] pl-[18px]">
        <T w={36} className="mt-[19px] font-bold">View</T>
        <div className="mt-[12px] flex h-[28px] items-center">
          <Check label="Grid" w={28} className="-mt-[3px]" />
          <div className="ml-[74px] mt-[2px] flex h-[26px] w-[60px] items-center justify-end rounded-[4px] border border-[#dadce0] bg-white pr-[3px] font-['Liberation_Sans',sans-serif] text-black"><T w={33}>10 pt</T></div>
          <div className="-mt-[2px] flex h-[26px] w-[15px] flex-col items-center justify-around rounded-[4px] border border-[#dadce0] text-[#8d8f92]">
            <Svg className="h-[5px] w-[10px]" vb="0 0 10 5"><path d="M0 5h10L5 0z" /></Svg>
            <div className="h-px w-full bg-[#dadce0]" />
            <Svg className="h-[5px] w-[10px]" vb="0 0 10 5"><path d="M0 0h10L5 5z" /></Svg>
          </div>
          <div className={`ml-[5px] h-[28px] w-[56px] ${btn}`}>
            <div className="h-[17px] w-[29px] border border-black bg-[#d0d0d0]" />
            <Svg className="ml-[4px] h-[14px] w-[13px] text-[#444]" vb="0 0 13 14" stroke={1.100}><path d="M1 13l.5-3L7 4.500l2 2L3.500 12zM6 3.500l4 4" /><path d="M8.500 4l2-2.500 1.500 1.500L9.500 5z" fill="#444" /></Svg>
          </div>
        </div>
        <Check label="Page View" w={71} className="mt-[6px]" />
        <div className="mt-[9px] flex items-center">
          <T w={81} className="ml-[23px]">Background</T>
          <div className={`ml-[20px] h-[27px] w-[138px] text-[15px] ${btn}`}><T w={65}>Change...</T></div>
        </div>
        <Check on={false} label="Background Color" w={121} className="mt-[9px]" />
        <div className="mt-[15px] flex">
          <Check on={false} label="Shadow" w={54} />
          <Check label="Sketch" w={45} className="ml-[53px]" />
        </div>
      </div>
      <div className="h-[170px] border-b border-[#dadce0] pl-[18px] pt-[16px]">
        <T w={57} className="font-bold">Options</T>
        <div className="mt-[16px] flex flex-col gap-[15px]">
          <Check label="Connection Arrows" w={130} />
          <Check label="Connection Points" w={124} />
          <Check label="Guides" w={46} />
          <Check label="Autosave" w={63} />
        </div>
      </div>
      <div className="h-[112px] border-b border-[#dadce0] pl-[18px] pt-[16px]">
        <T w={74} className="font-bold">Paper Size</T>
        <div className="mt-[9px] flex h-[26px] w-[257px] items-center rounded-[4px] border border-[#dadce0] bg-[#eee] font-['Liberation_Sans',sans-serif] text-[15px] text-black">
          <T w={141} className="-mt-px ml-[7px]">US-Letter (8,5" x 11")</T>
          <Svg className="ml-[91px] h-[7px] w-[11px]" vb="0 0 11 7" stroke={2.200}><path d="M.8.800l4.700 4.700L10.200.8" /></Svg>
        </div>
        <div className="mt-[9px] flex">
          <div className="ml-[11px] flex h-[15px] w-[15px] items-center justify-center rounded-full border-[1.500px] border-[#6200ff] bg-white"><div className="h-[9px] w-[9px] rounded-full bg-[#6200ff]" /></div>
          <T w={52} className="ml-[9px] mt-[3px]">Portrait</T>
          <div className="ml-[13px] h-[15px] w-[15px] rounded-full border border-[#767676] bg-white" />
          <T w={71} className="ml-[9px] mt-[3px]">Landscape</T>
        </div>
      </div>
      <div className="flex h-[79px] flex-col gap-[2px] border-b border-[#dadce0] pl-[18px] pt-[15px] text-[15px]">
        <div className={`h-[24px] w-[262px] pb-0.5 ${btn}`}><T w={74}>Edit Data...</T></div>
        <div className={`h-[24px] w-[262px] pb-0.5 ${btn}`}><T w={125}>Clear Default Style</T></div>
      </div>
    </aside>
  );
}

export default function App() {
  return (
    <div className="flex h-[1080px] w-[1920px] flex-col overflow-hidden bg-[#131313] font-['Noto_Sans',sans-serif]">
      <SystemBar />
      <div className="flex min-h-0 flex-1">
        <Dock />
        <div className="flex min-w-0 flex-1 flex-col bg-[#d7daff]">
          <TabStrip />
          <AddressRow />
          <Bookmarks />
          <AppHeader />
          <Toolbar />
          <div className="flex min-h-0 flex-1">
            <Sidebar />
            <main className="flex w-[1300px] shrink-0 flex-col">
              <Canvas />
              <PageTabs />
            </main>
            <FormatPanel />
          </div>
        </div>
      </div>
    </div>
  );
}
